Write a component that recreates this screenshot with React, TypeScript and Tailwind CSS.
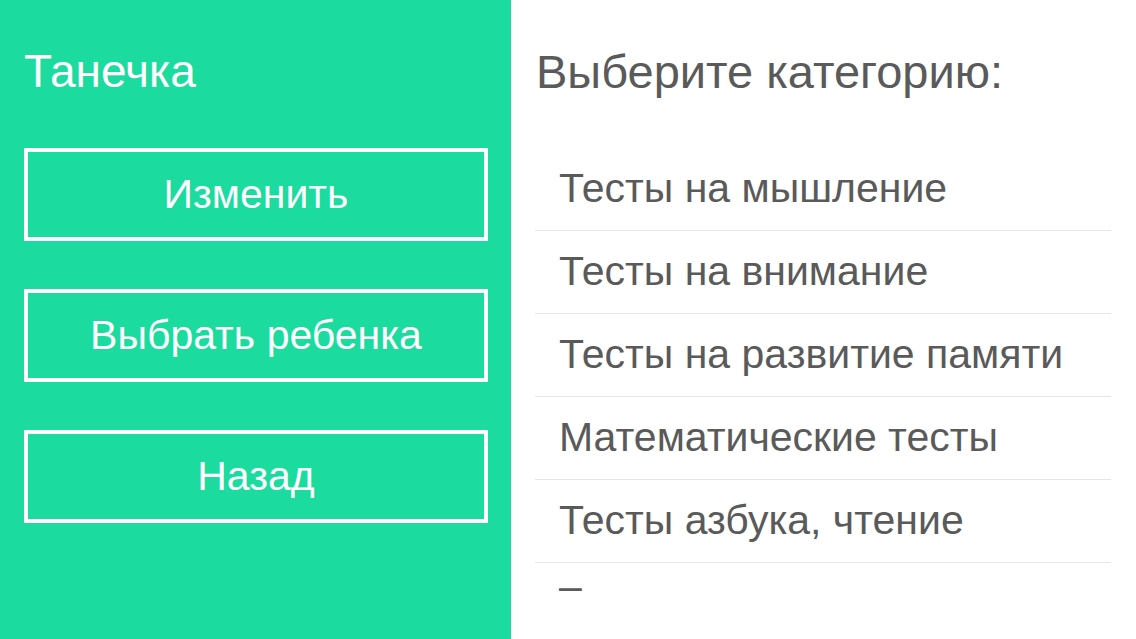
const ACTIONS = ['Изменить', 'Выбрать ребенка', 'Назад'];

const CATEGORIES = [
  'Тесты на мышление',
  'Тесты на внимание',
  'Тесты на развитие памяти',
  'Математические тесты',
  'Тесты азбука, чтение',
];

export default function App() {
  return (
    <div
      className="flex h-[639px] w-[1136px] overflow-hidden bg-white"
      style={{ fontFamily: '"Liberation Sans", Arial, sans-serif' }}
    >
      {/* Левая панель — профиль ребенка */}
      <aside className="flex w-[511px] shrink-0 flex-col bg-[#1bdb9f] px-6 pt-[45px]">
        <h1 className="text-[46px] leading-[53px] text-white">Танечка</h1>
        <div className="mt-[50px] flex flex-col gap-12">
          {ACTIONS.map((label) => (
            <button
              key={label}
              type="button"
              className="flex h-[93px] w-[464px] items-center justify-center border-4 border-white text-[41px] text-white"
            >
              {label}
            </button>
          ))}
        </div>
      </aside>

      {/* Правая панель — категории */}
      <main className="flex flex-1 flex-col pl-6 pr-[25px] pt-[45px]">
        <h2 className="pl-[1px] text-[47px] leading-[53px] text-[#5a5a5a]">
          Выберите категорию:
        </h2>
        <ul className="mt-[50px]">
          {CATEGORIES.map((c) => (
            <li
              key={c}
              className="flex h-[83px] items-center border-b border-[#e6e6e6] pl-6 text-[41px] text-[#5a5a5a]"
            >
              {c}
            </li>
          ))}
          <li className="pl-6 text-[41px] leading-[47px] text-[#5a5a5a]">–</li>
        </ul>
      </main>
    </div>
  );
}
